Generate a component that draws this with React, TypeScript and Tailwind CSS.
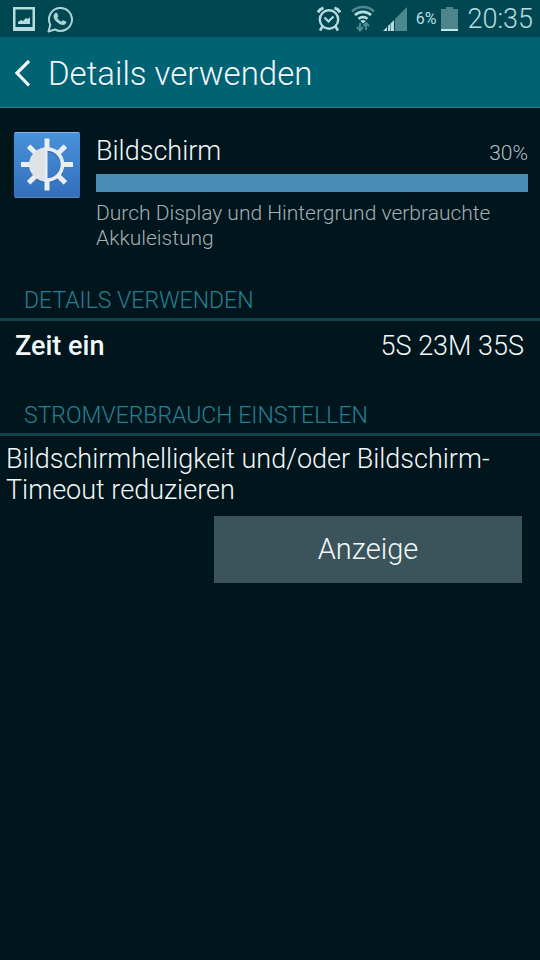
import type { ReactNode } from "react"

const usage = {
    name: "Bildschirm",
    percent: 30,
    description: "Durch Display und Hintergrund verbrauchte Akkuleistung",
}

const details = [{ label: "Zeit ein", value: "5S 23M 35S" }]

const rays = [0, 45, 90, 135, 180, 225, 270, 315]

function PictureIcon() {
    return (
        <svg viewBox="0 0 22 24" className="w-[22px] h-6" aria-hidden="true">
            <path fill="#b5dde0" fillRule="evenodd" d="M0 0h22v24H0zM2.5 2.5V20h17V2.500z" />
            <path fill="#b5dde0" d="M5 17v-2l3-2 2 1 3-3 2 1 2-2v7z" />
        </svg>
    )
}

function WhatsAppIcon() {
    return (
        <svg viewBox="0 0 26 28" className="w-[26px] h-7" aria-hidden="true">
            <path
                fill="none"
                stroke="#a9d3d7"
                strokeWidth="2"
                strokeLinejoin="round"
                d="M1.500 26.500l1.800-6.800A11.500 11.500 0 1 1 8 24.500z"
            />
            <path
                fill="#a9d3d7"
                d="M8.2 8.1c.5-.5 1.6-.6 1.9 0l1.2 2.8c.2.5-.9 1.5-1.1 1.9.9 1.8 2.4 3.1 4.3 3.8.5-.3 1.2-1.6 1.7-1.4l2.8 1.4c.6.4.2 1.9-.5 2.5-1.6 1.3-3.7 1-5.5.2-2.9-1.3-5.1-3.6-6.2-6.2-.6-1.8-.1-3.9 1.4-5z"
            />
        </svg>
    )
}

function AlarmIcon() {
    return (
        <svg viewBox="0 0 24 26" className="w-6 h-[26px]" fill="none" stroke="#b5dde0" aria-hidden="true">
            <circle cx="12" cy="13.5" r="9.2" strokeWidth="2.4" />
            <path strokeWidth="2.2" d="M7.500 11.500l4 4 5-5" />
            <path strokeWidth="3" d="M1 6.500Q2.500 3 6.500 1.900M23 6.500Q21.500 3 17.500 1.900" />
            <path strokeWidth="2.6" d="M5.500 20.500L3 24.500M18.500 20.500l2.500 4" />
        </svg>
    )
}

function WifiIcon() {
    return (
        <svg viewBox="0 0 24 27" className="w-6 h-[27px]" fill="none" aria-hidden="true">
            <path stroke="#4f8990" strokeWidth="2.6" d="M1 6.5c6-6 16-6 22 0" />
            <path stroke="#b5dde0" strokeWidth="2.6" d="M4 10.200c4.400-4.400 11.600-4.400 16 0M7.500 13.900c2.400-2.400 6.600-2.400 9 0" />
            <path fill="#b5dde0" d="M9.300 16c1.500-1.400 3.900-1.400 5.400 0L12 18.500z" />
            <path stroke="#4f8990" strokeWidth="2" d="M9 18v7M6 22l3 3.500 3-3.500M15 25v-7M12.500 21l2.500-3 3 3" />
        </svg>
    )
}

function SignalIcon() {
    return (
        <svg viewBox="0 0 24 24" className="size-6" aria-hidden="true">
            <path fill="#4f8990" d="M12 12L24 0v24H12z" />
            <path fill="#b5dde0" d="M0 24l4-4v4zM5 19l2-2v7H5zM7.500 16.500L11 13v11H7.500z" />
        </svg>
    )
}

function BatteryIcon() {
    return (
        <svg viewBox="0 0 17 24" className="w-[17px] h-6" aria-hidden="true">
            <path fill="#4c858c" d="M5 0h7v2h5v20H0V2h5z" />
            <path fill="#c3e6e8" d="M0 22h17v2H0z" />
        </svg>
    )
}

function BrightnessIcon() {
    return (
        <svg viewBox="0 0 66 66" className="size-[66px] shrink-0" aria-hidden="true">
            <defs>
                <linearGradient id="tile" x1="0" y1="0" x2="0" y2="1">
                    <stop offset="0" stopColor="#4893da" />
                    <stop offset="1" stopColor="#326eba" />
                </linearGradient>
            </defs>
            <rect width="66" height="66" rx="2" fill="url(#tile)" />
            <path stroke="#85b5e8" strokeWidth="1" d="M1 .5h64" />
            <path stroke="#5d86bd" strokeWidth="1" d="M1 65.500h64" />
            {/* Soft drop shadow under the symbol */}
            <circle cx="33" cy="33.500" r="15.500" fill="none" stroke="#2a5c9f" strokeWidth="4" opacity=".6" />
            <g fill="#ebeef0">
                {rays.map((angle) => (
                    <rect key={angle} x="30.500" y="6.500" width="5" height="11" rx=".5" transform={`rotate(${angle} 33 32.500)`} />
                ))}
            </g>
            <circle cx="33" cy="32.500" r="15.500" fill="none" stroke="#ebeef0" strokeWidth="3.600" />
            <path fill="#dfe3e6" d="M31 16.500a16 16 0 0 0 0 32z" />
            <path fill="#ebeef0" d="M31 16.500h2.500v32H31z" />
        </svg>
    )
}

function StatusBar() {
    return (
        <div className="flex h-[37px] items-center justify-between bg-[#004751] pl-[13px] pr-[7px] text-[#b5dde0]">
            <div className="flex items-center gap-3">
                <PictureIcon />
                <WhatsAppIcon />
            </div>
            <div className="flex items-center">
                <div className="flex items-center gap-2">
                    <AlarmIcon />
                    <span className="ml-[2px]">
                        <WifiIcon />
                    </span>
                    <SignalIcon />
                </div>
                <span className="ml-[9px] text-base font-normal">6%</span>
                <span className="ml-[5px]">
                    <BatteryIcon />
                </span>
                <span className="ml-[9px] pt-px text-[27px]">20:35</span>
            </div>
        </div>
    )
}

function SectionTitle({ children }: { children: ReactNode }) {
    return (
        <h2 className="border-b-3 border-[#10434c] px-6 pt-px pb-[2px] text-[23px] leading-[30px] text-[#258093]">
            {children}
        </h2>
    )
}

export default function App() {
    return (
        <div className="min-h-screen bg-[#00151c] font-['Roboto','Noto_Sans',sans-serif] font-light text-[#f2f8f9]">
            <StatusBar />

            <header className="flex h-[71px] items-center gap-[18px] border-b border-[#34818b] bg-[#006374] pt-1 pl-[14px] text-shadow-2xs">
                <button type="button" aria-label="Zurück">
                    <svg viewBox="0 0 16 28" className="w-4 h-7" fill="none" aria-hidden="true">
                        <path stroke="#f2f8f9" strokeWidth="3.200" d="M15 1L3 13l12 12.500" />
                    </svg>
                </button>
                <h1 className="text-[33px]">Details verwenden</h1>
            </header>

            <main>
                <section className="flex gap-4 pt-6 pr-3 pl-[14px]">
                    <BrightnessIcon />
                    <div className="min-w-0 flex-1">
                        <div className="flex items-baseline justify-between leading-[39px]">
                            <label htmlFor="usage" className="text-[27px]">{usage.name}</label>
                            <span className="text-[21px] text-[#b3bfc2]">{usage.percent}%</span>
                        </div>
                        {/* The bar is relative to the biggest consumer, so the top entry fills it */}
                        <progress
                            id="usage"
                            value={usage.percent}
                            max={usage.percent}
                            className="mt-px block h-[18px] w-full appearance-none [&::-webkit-progress-bar]:bg-transparent [&::-webkit-progress-value]:bg-[#468cb4]"
                        />
                        <p className="mt-[9px] text-[21px] leading-[25px] text-[#a3b0b4]">{usage.description}</p>
                    </div>
                </section>

                <section className="mt-[34px]">
                    <SectionTitle>DETAILS VERWENDEN</SectionTitle>
                    <dl className="text-[27px]">
                        {details.map((d) => (
                            <div key={d.label} className="flex h-[51px] items-center justify-between pr-4 pl-[15px]">
                                <dt className="font-medium">{d.label}</dt>
                                <dd>{d.value}</dd>
                            </div>
                        ))}
                    </dl>
                </section>

                <section className="mt-7">
                    <SectionTitle>STROMVERBRAUCH EINSTELLEN</SectionTitle>
                    <p className="mt-2 px-[6px] text-[27px] leading-[31px]">
                        Bildschirmhelligkeit und/oder Bildschirm-Timeout reduzieren
                    </p>
                    <div className="mt-[10px] flex justify-end pr-[18px]">
                        <button type="button" className="h-[67px] w-[308px] bg-[#3b545b] pt-px text-[29px]">
                            Anzeige
                        </button>
                    </div>
                </section>
            </main>
        </div>
    )
}
